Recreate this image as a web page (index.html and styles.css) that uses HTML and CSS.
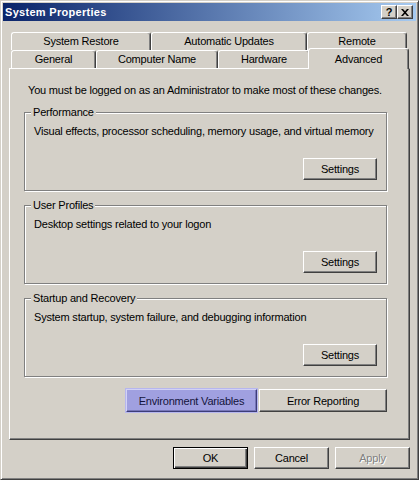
FILE: index.html
```html
<!DOCTYPE html>
<html lang="en">
    <head>
        <meta charset="utf-8">
        <title>System Properties</title>
        <link rel="stylesheet" href="styles.css">
    </head>
    <body>
        <div class="window">
            <div class="titlebar">
                <span class="title">System Properties</span>
                <div class="caption-btns">
                    <button class="cap-btn help">?</button>
                    <button class="cap-btn close">
                        <svg width="8" height="7" viewBox="0 0 8 7">
                            <path d="M0 0h2l2 2.3L6 0h2L5 3.5 8 7H6L4 4.7 2 7H0l3-3.5z" fill="#000"/>
                        </svg>
                    </button>
                </div>
            </div>
            <div class="dialog">
                <div class="tabs">
                    <div class="tab-row">
                        <div class="tab w-restore">System Restore</div>
                        <div class="tab w-updates">Automatic Updates</div>
                        <div class="tab w-remote">Remote</div>
                    </div>
                    <div class="tab-row">
                        <div class="tab w-general">General</div>
                        <div class="tab w-computer">Computer Name</div>
                        <div class="tab w-hardware">Hardware</div>
                        <div class="tab w-advanced active">Advanced</div>
                    </div>
                </div>
                <div class="panel">
                    <p class="intro">You must be logged on as an Administrator to make most of these changes.</p>

                    <fieldset class="group">
                        <legend>Performance</legend>
                        <p class="desc">Visual effects, processor scheduling, memory usage, and virtual memory</p>
                        <div class="group-actions">
                            <button class="btn settings">Settings</button>
                        </div>
                    </fieldset>

                    <fieldset class="group">
                        <legend>User Profiles</legend>
                        <p class="desc">Desktop settings related to your logon</p>
                        <div class="group-actions">
                            <button class="btn settings">Settings</button>
                        </div>
                    </fieldset>

                    <fieldset class="group">
                        <legend>Startup and Recovery</legend>
                        <p class="desc">System startup, system failure, and debugging information</p>
                        <div class="group-actions">
                            <button class="btn settings">Settings</button>
                        </div>
                    </fieldset>

                    <div class="panel-actions">
                        <button class="btn env hot">Environment Variables</button>
                        <button class="btn report">Error Reporting</button>
                    </div>
                </div>
                <div class="dialog-actions">
                    <button class="btn default">OK</button>
                    <button class="btn">Cancel</button>
                    <button class="btn" disabled>Apply</button>
                </div>
            </div>
        </div>
    </body>
</html>
```

FILE: styles.css
```css
html, body {
    margin: 0;
    padding: 0;
}
body {
    background: #d4d0c8;
    font-family: "Liberation Sans", Arial, sans-serif;
    font-size: 11px;
    letter-spacing: -0.2px;
    color: #000;
}
p {
    margin: 0;
}
button {
    font-family: "Liberation Sans", Arial, sans-serif;
    font-size: 11px;
    letter-spacing: -0.2px;
    color: #000;
    padding: 0;
    cursor: default;
}
button:focus {
    outline: none;
}

/* window frame */
.window {
    width: 419px;
    height: 480px;
    box-sizing: border-box;
    border: 1px solid;
    border-color: #d4d0c8 #404040 #404040 #d4d0c8;
    box-shadow: inset 1px 1px #fff, inset -1px -1px #808080;
    padding: 2px;
    background: #d4d0c8;
    display: flex;
    flex-direction: column;
}
.titlebar {
    height: 18px;
    flex-shrink: 0;
    display: flex;
    align-items: center;
    justify-content: space-between;
    padding: 0 3px 0 2px;
    background: linear-gradient(to right, #0a246a, #a6caf0);
}
.title {
    color: #fff;
    font-weight: bold;
    font-size: 11px;
    letter-spacing: 0.3px;
}
.caption-btns {
    display: flex;
}
.cap-btn {
    width: 16px;
    height: 14px;
    box-sizing: border-box;
    background: #d4d0c8;
    border: 1px solid;
    border-color: #fff #404040 #404040 #fff;
    box-shadow: inset -1px -1px #808080;
    display: flex;
    align-items: center;
    justify-content: center;
    font-weight: bold;
    font-size: 11px;
    line-height: 12px;
    letter-spacing: 0;
}

/* dialog body */
.dialog {
    flex: 1;
    display: flex;
    flex-direction: column;
    padding: 11px 6px 0;
}
.tab-row {
    display: flex;
    height: 18px;
    margin-left: 2px;
}
.tab {
    box-sizing: border-box;
    height: 18px;
    border: 1px solid;
    border-bottom: none;
    border-color: #fff #404040 #d4d0c8 #fff;
    border-radius: 3px 3px 0 0;
    box-shadow: inset -1px 0 #808080;
    background: #d4d0c8;
    text-align: center;
    line-height: 16px;
}
.tab.active {
    position: relative;
    z-index: 1;
    height: 21px;
    margin: -2px -2px 0 -2px;
    line-height: 18px;
    padding-top: 1px;
}
.w-restore { width: 140px; }
.w-updates { width: 156px; }
.w-remote { width: 100px; }
.w-general { width: 85px; }
.w-computer { width: 122px; }
.w-hardware { width: 92px; }
.w-advanced { width: 101px; }

.panel {
    height: 372px;
    box-sizing: border-box;
    border: 1px solid;
    border-color: #fff #404040 #404040 #fff;
    box-shadow: inset -1px -1px #808080;
    padding: 15px 22px 0 14px;
}
.intro {
    line-height: 13px;
    margin: 0 0 9px 4px;
    white-space: nowrap;
}

/* group boxes */
.group {
    margin: 0 0 8px;
    min-width: 0;
    border: 1px solid #808080;
    box-shadow: 1px 1px #fff, inset 1px 1px #fff;
    padding: 6px 9px 10px 9px;
}
.group legend {
    padding: 0 2px;
    margin-left: -3px;
    line-height: 13px;
    background: #d4d0c8;
}
.desc {
    line-height: 13px;
    white-space: nowrap;
}
.group-actions {
    display: flex;
    justify-content: flex-end;
    margin-top: 20px;
}

/* buttons */
.btn {
    box-sizing: border-box;
    width: 75px;
    height: 22px;
    background: #d4d0c8;
    border: 1px solid;
    border-color: #fff #404040 #404040 #fff;
    box-shadow: inset -1px -1px #808080;
}
.btn.settings {
    width: 74px;
}
.btn.default {
    border-color: #000;
    box-shadow: inset 1px 1px #fff, inset -1px -1px #404040, inset -2px -2px #808080;
}
.btn:disabled {
    color: #808080;
    text-shadow: 1px 1px #fff;
}
.panel-actions {
    display: flex;
    justify-content: flex-end;
    gap: 2px;
    margin-top: 12px;
}
.btn.env {
    width: 131px;
    height: 23px;
}
.btn.report {
    width: 128px;
    height: 23px;
}
.btn.hot {
    background: #a0a0e0;
    border-color: #d2d2f6 #3c3c78 #3c3c78 #d2d2f6;
    box-shadow: inset -1px -1px #7676b8;
    outline: 1px solid #b6b6ee;
    color: #14143c;
}
.dialog-actions {
    display: flex;
    justify-content: flex-end;
    gap: 6px;
    margin-top: 7px;
}
```
